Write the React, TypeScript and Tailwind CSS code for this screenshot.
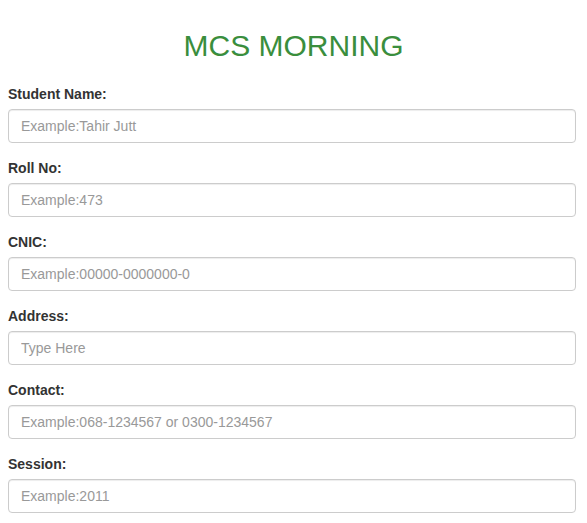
import React from "react";

const fields = [
  { label: "Student Name:", placeholder: "Example:Tahir Jutt" },
  { label: "Roll No:", placeholder: "Example:473" },
  { label: "CNIC:", placeholder: "Example:00000-0000000-0" },
  { label: "Address:", placeholder: "Type Here" },
  { label: "Contact:", placeholder: "Example:068-1234567 or 0300-1234567" },
  { label: "Session:", placeholder: "Example:2011" },
];

export default function App() {
  return (
    <div className="bg-white min-h-screen px-2 text-[14px] text-[#333333]" style={{ fontFamily: '"Liberation Sans", Arial, sans-serif' }}>
      <h2 className="pt-[29px] text-center text-[30px] leading-[33px] text-[#3a8e3d] font-normal">MCS MORNING</h2>
      <div className="mt-[22px] w-[568px]">
        {fields.map((f) => (
          <div key={f.label} className="mb-[15px]">
            <label className="block font-bold leading-[20px] mb-[5px]">{f.label}</label>
            <input
              type="text"
              placeholder={f.placeholder}
              className="block w-full h-[34px] px-3 py-[6px] text-[14px] leading-[20px] border border-[#cccccc] rounded-[4px] shadow-[inset_0_1px_1px_rgba(0,0,0,0.075)] placeholder:text-[#999999] outline-none"
            />
          </div>
        ))}
      </div>
    </div>
  );
}
